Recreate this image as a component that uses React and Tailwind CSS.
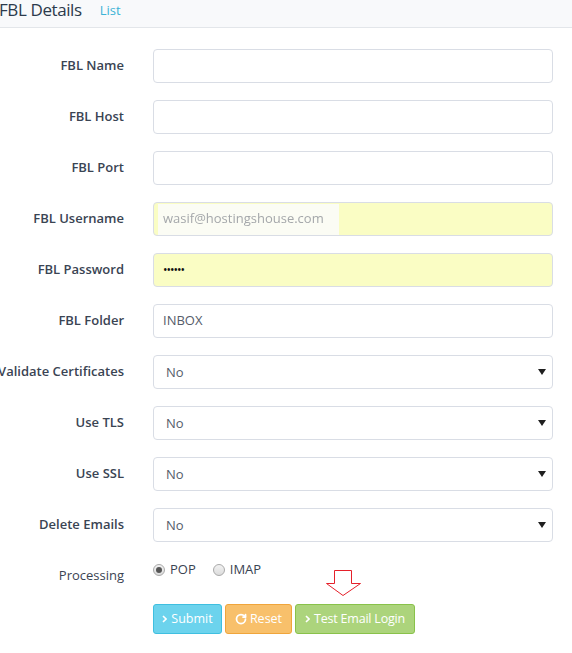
import { RotateCw } from 'lucide-react';

const font = { fontFamily: '"Open Sans", "Liberation Sans", sans-serif' };

function Row({ label, children }) {
  return (
    <div className="flex items-center h-[34px]">
      <div className="w-[125px] shrink-0 flex justify-end">
        <span className="whitespace-nowrap text-[13px] font-semibold text-[#3a4453] mr-[1px]">{label}</span>
      </div>
      <div className="ml-[28px] w-[400px]">{children}</div>
    </div>
  );
}

function TextBox({ value = '', yellow = false, children }) {
  return (
    <div
      className={`h-[34px] w-full rounded-[4px] border border-[#d9dde5] flex items-center px-[9px] text-[13px] text-[#555c6a] ${
        yellow ? 'bg-[#fafdc4]' : 'bg-white'
      }`}
    >
      {children || value}
    </div>
  );
}

function Select({ value }) {
  return (
    <div className="h-[34px] w-full rounded-[4px] border border-[#d9dde5] bg-white flex items-center justify-between pl-[12px] pr-[6px] text-[13px] text-[#555c6a]">
      <span className="mt-[2px]">{value}</span>
      <svg width="8" height="6" viewBox="0 0 8 6">
        <path d="M0 0 H8 L4 6 Z" fill="#1f1f1f" />
      </svg>
    </div>
  );
}

function Radio({ checked, label }) {
  return (
    <label className="flex items-center gap-[5px] text-[13px] text-[#3a4453]">
      <span className="w-[12px] h-[12px] rounded-full border border-[#a9a9a9] bg-gradient-to-b from-[#f2f2f2] to-[#dcdcdc] flex items-center justify-center">
        {checked && <span className="w-[6px] h-[6px] rounded-full bg-[#555]" />}
      </span>
      <span>{label}</span>
    </label>
  );
}

function Chevron() {
  return (
    <svg width="5" height="8" viewBox="0 0 5 8" className="mr-[1px]">
      <path d="M1 1 L4 4 L1 7" fill="none" stroke="white" strokeWidth="1.6" />
    </svg>
  );
}

export default function App() {
  return (
    <div className="w-[572px] h-[653px] bg-white overflow-hidden" style={font}>
      <div className="h-[28px] bg-[#f8f9fb] border-b border-[#e3e6ea] flex items-center">
        <span className="ml-[-1px] text-[17px] text-[#2c3a4c] leading-none mt-[-9px] tracking-[-0.4px]">FBL Details</span>
        <span className="ml-[18px] text-[13px] text-[#3cb3d6] mt-[-6px]">List</span>
      </div>

      <div className="pt-[21px] flex flex-col gap-[17px]">
        <Row label="FBL Name"><TextBox /></Row>
        <Row label="FBL Host"><TextBox /></Row>
        <Row label="FBL Port"><TextBox /></Row>
        <Row label="FBL Username">
          <TextBox yellow>
            <span className="ml-[-5px] h-[31px] w-[181px] bg-[#fbfcf4] flex items-center pl-[5px] text-[#a4a7aa] blur-[0.5px]">
              wasif@hostingshouse.com
            </span>
          </TextBox>
        </Row>
        <Row label="FBL Password">
          <TextBox yellow>
            <span className="text-[#111] text-[12px] tracking-[-1px]">••••••</span>
          </TextBox>
        </Row>
        <Row label="FBL Folder"><TextBox value="INBOX" /></Row>
        <Row label="Validate Certificates"><Select value="No" /></Row>
        <Row label="Use TLS"><Select value="No" /></Row>
        <Row label="Use SSL"><Select value="No" /></Row>
        <Row label="Delete Emails"><Select value="No" /></Row>
      </div>

      <div className="flex items-start mt-[17px] h-[26px]">
        <div className="w-[125px] shrink-0 flex justify-end pt-[7px]">
          <span className="text-[13px] text-[#3a4453] mr-[1px]">Processing</span>
        </div>
        <div className="ml-[28px] flex gap-[17px] pt-[1px]">
          <Radio checked label="POP" />
          <Radio label="IMAP" />
        </div>
      </div>

      <div className="relative ml-[153px] mt-[19px] flex gap-[3px]">
        <svg className="absolute left-[173px] top-[-34px]" width="37" height="27" viewBox="0 0 37 27">
          <path d="M8.5 0.5 H25.5 V13.5 H34.5 L17 25.5 L0.5 13.5 H8.5 Z" fill="white" stroke="#e5202a" strokeWidth="1" />
        </svg>
        <button className="h-[30px] w-[69px] justify-center rounded-[3px] border border-[#3fbfe0] bg-[#6cd3ed] text-white text-[12.5px] flex items-center gap-[3px]">
          <Chevron />Submit
        </button>
        <button className="h-[30px] w-[67px] justify-center rounded-[3px] border border-[#f0a53b] bg-[#f8c06b] text-white text-[12.5px] flex items-center gap-[3px]">
          <RotateCw size={12} strokeWidth={3.5} />Reset
        </button>
        <button className="h-[30px] w-[120px] justify-center rounded-[3px] border border-[#89c24a] bg-[#acd47c] text-white text-[12.5px] flex items-center gap-[3px] tracking-[-0.2px]">
          <Chevron />Test Email Login
        </button>
      </div>
    </div>
  );
}
